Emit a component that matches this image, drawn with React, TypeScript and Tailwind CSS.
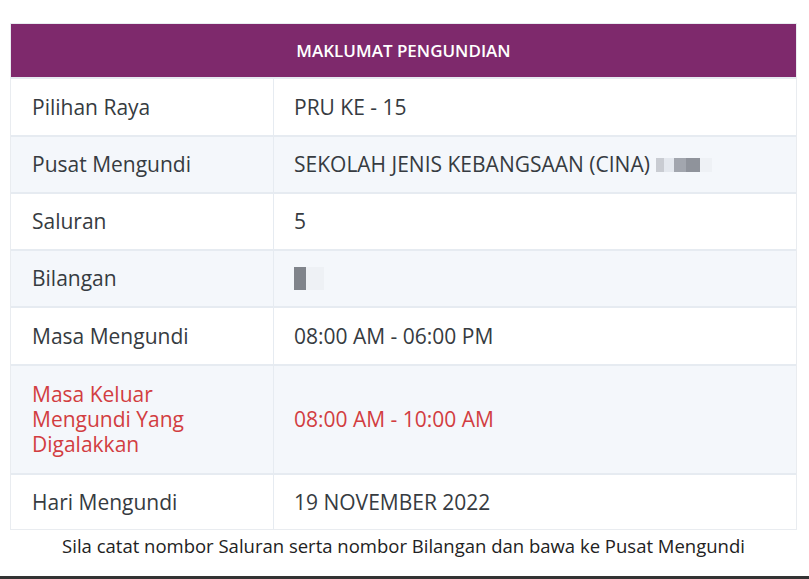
const rows = [
    { label: "Pilihan Raya", value: "PRU KE - 15", h: "h-[58px]" },
    { label: "Pusat Mengundi", value: "SEKOLAH JENIS KEBANGSAAN (CINA)", h: "h-[57px]", blurWide: true },
    { label: "Saluran", value: "5", h: "h-[57px]" },
    { label: "Bilangan", value: "", h: "h-[57px]", blurSmall: true },
    { label: "Masa Mengundi", value: "08:00 AM - 06:00 PM", h: "h-[58px]" },
    { label: "Masa Keluar Mengundi Yang Digalakkan", value: "08:00 AM - 10:00 AM", h: "h-[109px]", red: true },
    { label: "Hari Mengundi", value: "19 NOVEMBER 2022", h: "h-[56px]" },
];

const App = () => {
    return (
        <div
            className="relative h-[579px] w-[809px] bg-white text-[#363b41]"
            style={{ fontFamily: "'Open Sans', 'Noto Sans', sans-serif" }}
        >
            <div className="pt-[23px] pl-[10px] pr-[12px]">
                <div className="border border-[#e9ecf0]">
                    <div className="flex h-[53px] items-center justify-center bg-[#7e296c] text-[17px] font-semibold text-white">
                        MAKLUMAT PENGUNDIAN
                    </div>
                    {rows.map((row, i) => (
                        <div
                            key={row.label}
                            className={`flex ${row.h} border-t-2 border-[#e6ebf1] ${
                                i % 2 === 1 ? "bg-[#f4f7fb]" : "bg-white"
                            } ${row.red ? "text-[#d23d41]" : ""}`}
                        >
                            <div className="flex w-[263px] shrink-0 items-center border-r border-[#e6ebf1] pl-[21px] pr-[40px] text-[21px] font-medium leading-[25px]">
                                {row.label}
                            </div>
                            <div className="flex flex-1 items-center pl-[20px] text-[21px] font-medium leading-[25px]">
                                {row.value}
                                {row.blurWide && (
                                    <span className="ml-[6px] flex h-[14px] items-center gap-0">
                                        <span className="h-[14px] w-[8px] bg-[#c9ccd2]" />
                                        <span className="h-[14px] w-[10px] bg-[#e4e8ee]" />
                                        <span className="h-[14px] w-[12px] bg-[#a2a6ae]" />
                                        <span className="h-[14px] w-[14px] bg-[#8f939b]" />
                                        <span className="h-[14px] w-[12px] bg-[#eef1f5]" />
                                    </span>
                                )}
                                {row.blurSmall && (
                                    <span className="flex items-center">
                                        <span className="h-[23px] w-[12px] bg-[#80848b]" />
                                        <span className="h-[23px] w-[18px] bg-[#eef1f5]" />
                                    </span>
                                )}
                            </div>
                        </div>
                    ))}
                </div>
                <p className="mt-[2px] text-center text-[18.5px] text-[#222]">
                    Sila catat nombor Saluran serta nombor Bilangan dan bawa ke Pusat Mengundi
                </p>
            </div>
            <div className="absolute bottom-0 left-0 h-[3px] w-full bg-[#333]" />
        </div>
    );
};

export default App;
